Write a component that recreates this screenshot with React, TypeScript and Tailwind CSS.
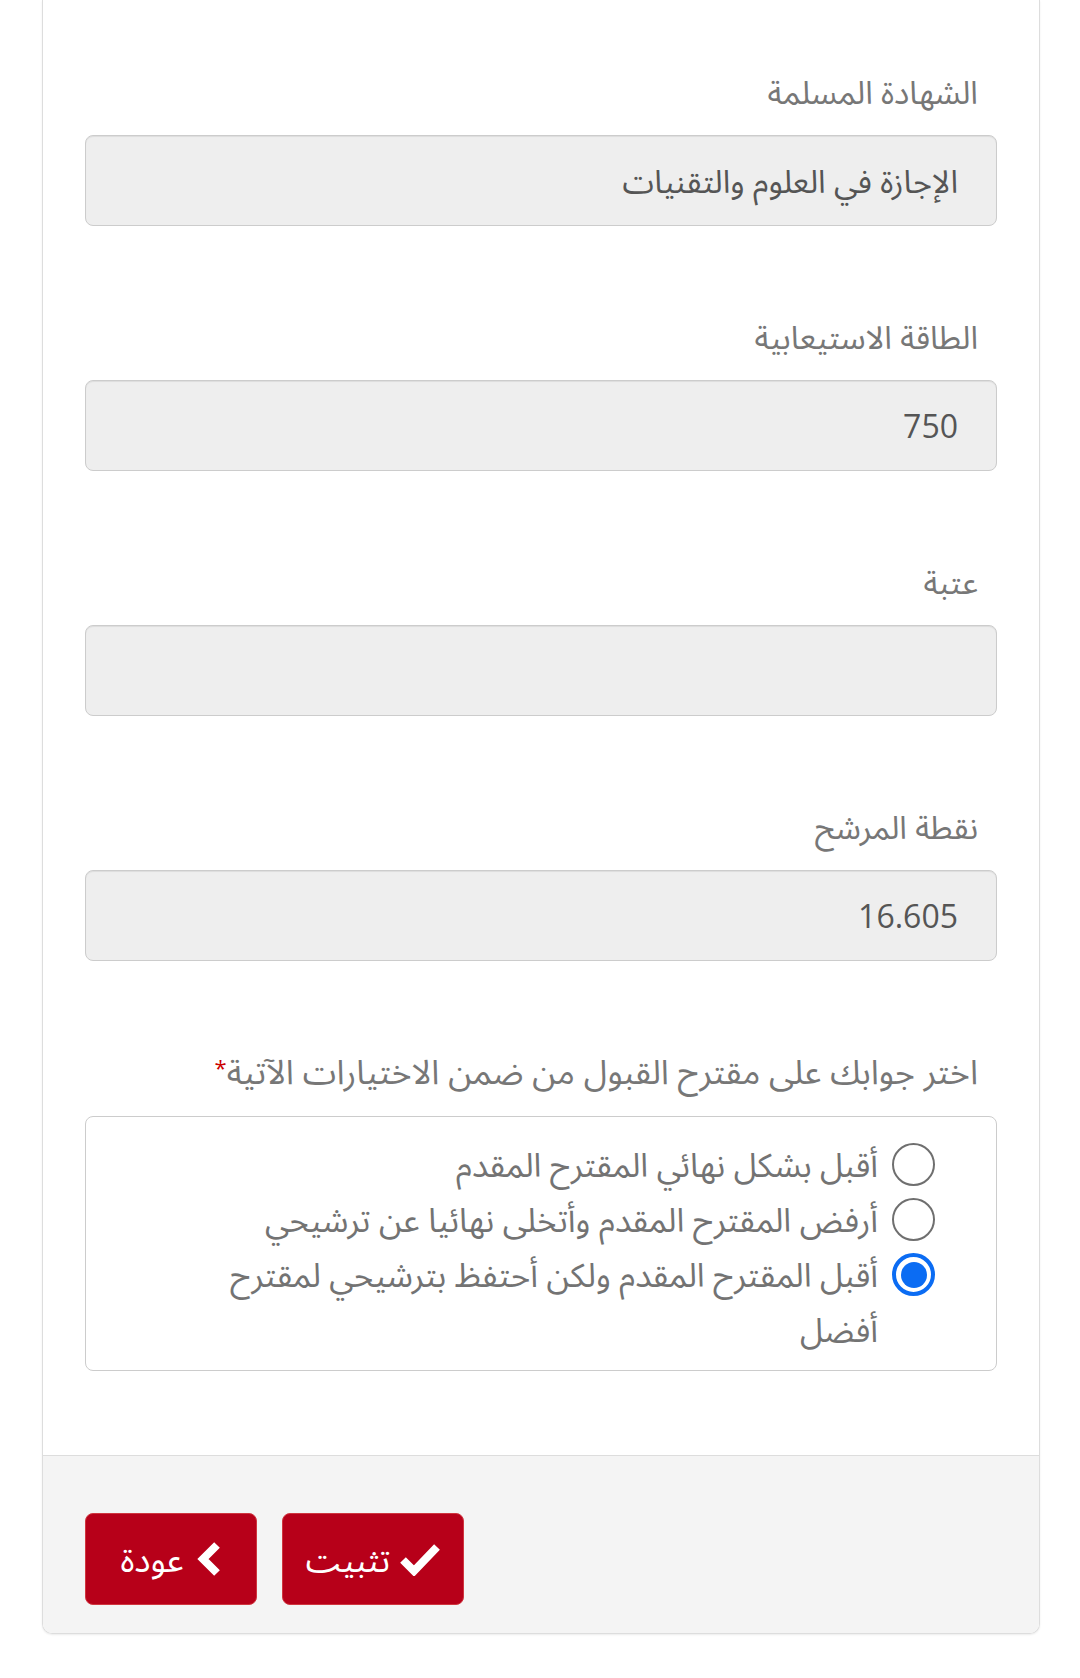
import React from 'react';

const fields = [
  { label: 'الشهادة المسلمة', value: 'الإجازة في العلوم والتقنيات' },
  { label: 'الطاقة الاستيعابية', value: '750' },
  { label: 'عتبة', value: '' },
  { label: 'نقطة المرشح', value: '16.605' },
];

const options = [
  { text: 'أقبل بشكل نهائي المقترح المقدم', checked: false },
  { text: 'أرفض المقترح المقدم وأتخلى نهائيا عن ترشيحي', checked: false },
  { text: 'أقبل المقترح المقدم ولكن أحتفظ بترشيحي لمقترح أفضل', checked: true },
];

function Radio({ checked }: { checked: boolean }) {
  if (checked) {
    return (
      <span className="mt-[6px] flex h-[43px] w-[43px] shrink-0 items-center justify-center rounded-full border-[4px] border-[#0b6cf3] bg-white">
        <span className="h-[26px] w-[26px] rounded-full bg-[#0b6cf3]" />
      </span>
    );
  }
  return <span className="mt-[6px] h-[43px] w-[43px] shrink-0 rounded-full border-[2.5px] border-[#6f6f6f] bg-white" />;
}

function CheckIcon() {
  return (
    <svg width="40" height="34" viewBox="0 0 40 34" className="shrink-0">
      <path d="M3 18 L14 29 L37 5" fill="none" stroke="white" strokeWidth="8" strokeLinejoin="miter" />
    </svg>
  );
}

function ChevronIcon() {
  return (
    <svg width="26" height="34" viewBox="0 0 26 34" className="shrink-0">
      <path d="M21 3 L7 17 L21 31" fill="none" stroke="white" strokeWidth="8" strokeLinejoin="miter" />
    </svg>
  );
}

export default function App() {
  return (
    <div
      dir="rtl"
      className="min-h-[1678px] bg-white"
      style={{ fontFamily: '"Open Sans", "Noto Sans Arabic", "Noto Sans", "DejaVu Sans", sans-serif' }}
    >
      <div className="mr-[40px] w-[998px] overflow-hidden rounded-b-[10px] border border-t-0 border-[#dddddd] shadow-[0_1px_2px_rgba(0,0,0,0.08)]">
        {/* Body */}
        <div className="px-[42px] pb-[84px] pt-[70px]">
          {fields.map((f) => (
            <div key={f.label} className="mb-[89px]">
              <label className="mb-[22px] block h-[43px] pr-[19px] text-[32px] leading-[43px] text-[#777777]">
                {f.label}
              </label>
              <div className="flex h-[91px] items-center rounded-[8px] border-[1.5px] border-[#cccccc] bg-[#eeeeee] px-[38px] text-[32px] text-[#555555] shadow-[inset_0_1px_1px_rgba(0,0,0,0.075)]">
                {f.value}
              </div>
            </div>
          ))}

          <div>
            <label className="mb-[23px] block h-[43px] pr-[19px] text-[34px] leading-[43px] text-[#777777]">
              اختر جوابك على مقترح القبول من ضمن الاختيارات الآتية
              <span className="relative -top-[8px] text-[22px] text-[#cc0000]">*</span>
            </label>
            <div className="rounded-[8px] border-[1.5px] border-[#cccccc] bg-white pb-[13px] pl-[20px] pr-[61px] pt-[20px]">
              {options.map((o) => (
                <div key={o.text} className="flex items-start gap-[14px]">
                  <Radio checked={o.checked} />
                  <span className="max-w-[700px] text-[33px] leading-[55px] text-[#737373]">{o.text}</span>
                </div>
              ))}
            </div>
          </div>
        </div>

        {/* Footer */}
        <div className="flex justify-end gap-[25px] border-t-[1.5px] border-[#dddddd] bg-[#f4f4f4] px-[42px] pb-[28px] pt-[57px]">
          <button className="flex h-[92px] w-[182px] items-center justify-center gap-[10px] rounded-[8px] border-[1.5px] border-[#d0353f] bg-[#b70019] text-[34px] text-white">
            <CheckIcon />
            <span>تثبيت</span>
          </button>
          <button className="flex h-[92px] w-[172px] items-center justify-center gap-[12px] rounded-[8px] border-[1.5px] border-[#d0353f] bg-[#b70019] text-[34px] text-white">
            <ChevronIcon />
            <span>عودة</span>
          </button>
        </div>
      </div>
    </div>
  );
}
